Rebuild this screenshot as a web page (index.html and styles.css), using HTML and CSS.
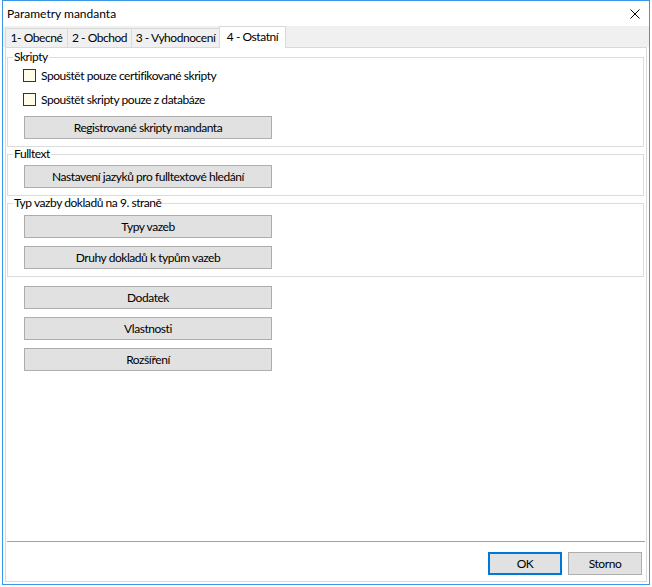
FILE: index.html
```html
<!DOCTYPE html>
<html lang="cs">
<head>
    <meta charset="UTF-8">
    <title>Parametry mandanta</title>
    <link rel="stylesheet" href="styles.css">
</head>
<body>
    <div class="window">
        <div class="titlebar">
            <span class="title">Parametry mandanta</span>
            <svg class="close-icon" width="10" height="10" viewBox="0 0 10 10">
                <path d="M0.5 0.5 L9.5 9.5 M9.5 0.5 L0.5 9.5" stroke="#000" stroke-width="1" fill="none"/>
            </svg>
        </div>
        <div class="client">
            <div class="tabs">
                <div class="tab tab-1">1- Obecné</div>
                <div class="tab tab-2">2 - Obchod</div>
                <div class="tab tab-3">3 - Vyhodnocení</div>
                <div class="tab tab-4 active">4 - Ostatní</div>
            </div>
            <div class="panel">
                <fieldset class="group">
                    <legend>Skripty</legend>
                    <label class="check-row"><span class="check-box"></span>Spouštět pouze certifikované skripty</label>
                    <label class="check-row"><span class="check-box"></span>Spouštět skripty pouze z databáze</label>
                    <div class="group-buttons">
                        <button type="button" class="btn">Registrované skripty mandanta</button>
                    </div>
                </fieldset>

                <fieldset class="group">
                    <legend>Fulltext</legend>
                    <div class="group-buttons">
                        <button type="button" class="btn">Nastavení jazyků pro fulltextové hledání</button>
                    </div>
                </fieldset>

                <fieldset class="group">
                    <legend>Typ vazby dokladů na 9. straně</legend>
                    <div class="group-buttons vazby-buttons">
                        <button type="button" class="btn">Typy vazeb</button>
                        <button type="button" class="btn">Druhy dokladů k typům vazeb</button>
                    </div>
                </fieldset>

                <div class="free-buttons">
                    <button type="button" class="btn">Dodatek</button>
                    <button type="button" class="btn">Vlastnosti</button>
                    <button type="button" class="btn">Rozšíření</button>
                </div>

                <div class="footer">
                    <div class="separator"></div>
                    <div class="footer-buttons">
                        <button type="button" class="btn btn-small btn-default">OK</button>
                        <button type="button" class="btn btn-small">Storno</button>
                    </div>
                </div>
            </div>
        </div>
    </div>
</body>
</html>
```

FILE: styles.css
```css
html, body {
    margin: 0;
    padding: 0;
    background: #fff;
    font-family: Lato, "Noto Sans", sans-serif;
    font-size: 12px;
    color: #000;
    font-variant-ligatures: none;
}

.window {
    box-sizing: border-box;
    width: 648px;
    height: 585px;
    margin-left: 2px;
    border: 1px solid #3a97e8;
    display: flex;
    flex-direction: column;
    background: #fff;
}

.titlebar {
    height: 25px;
    display: flex;
    align-items: center;
    justify-content: space-between;
    padding: 0 9px 0 4px;
}

.title {
    line-height: 25px;
}

.close-icon {
    display: block;
}

.client {
    flex: 1;
    display: flex;
    flex-direction: column;
    background: #fff;
    letter-spacing: -0.45px;
}

.tabs {
    height: 21px;
    background: #f0f0f0;
    display: flex;
    align-items: flex-end;
    padding-left: 2px;
}

.tab {
    box-sizing: border-box;
    height: 19px;
    border: 1px solid #d9d9d9;
    border-bottom: none;
    background: #f0f0f0;
    text-align: center;
    line-height: 18px;
    white-space: nowrap;
    margin-left: -1px;
}

.tab-1 {
    width: 63px;
    margin-left: 0;
}

.tab-2 {
    width: 65px;
}

.tab-3 {
    width: 89px;
}

.tab-4 {
    width: 67px;
}

.tab.active {
    height: 22px;
    line-height: 20px;
    background: #fff;
    margin-bottom: -1px;
    position: relative;
    z-index: 1;
}

.panel {
    flex: 1;
    margin: 0 2px 2px 2px;
    border: 1px solid #d9d9d9;
    background: #fff;
    display: flex;
    flex-direction: column;
}

.group {
    margin: 1px 2px 0 1px;
    padding: 0 0 7px 0;
    border: 1px solid #dcdcdc;
    min-width: 0;
}

.group:first-child {
    margin-top: 3px;
}

.group legend {
    margin-left: 5px;
    padding: 0 1px;
    line-height: 12px;
}

.check-row {
    display: flex;
    align-items: center;
    height: 24px;
    padding-left: 15px;
}

.check-box {
    box-sizing: border-box;
    width: 13px;
    height: 13px;
    border: 1px solid #333;
    background: #fffde8;
    margin-right: 5px;
}

.group-buttons {
    display: flex;
    flex-direction: column;
    gap: 8px;
    padding: 5px 0 0 16px;
}

.vazby-buttons {
    padding-top: 6px;
}

.btn {
    box-sizing: border-box;
    display: block;
    width: 248px;
    height: 23px;
    padding: 0;
    background: #e1e1e1;
    border: 1px solid #adadad;
    border-radius: 0;
    font-family: inherit;
    font-size: 12px;
    letter-spacing: inherit;
    color: #000;
}

.free-buttons {
    display: flex;
    flex-direction: column;
    gap: 8px;
    margin-top: 9px;
    padding-left: 18px;
}

.footer {
    margin-top: auto;
    margin-bottom: 6px;
}

.separator {
    height: 1px;
    margin: 0 1px;
    background: #a0a0a0;
}

.footer-buttons {
    display: flex;
    justify-content: flex-end;
    gap: 6px;
    margin-top: 10px;
    padding-right: 4px;
}

.btn-small {
    width: 74px;
}

.btn-default {
    border: 2px solid #0078d7;
}
```
